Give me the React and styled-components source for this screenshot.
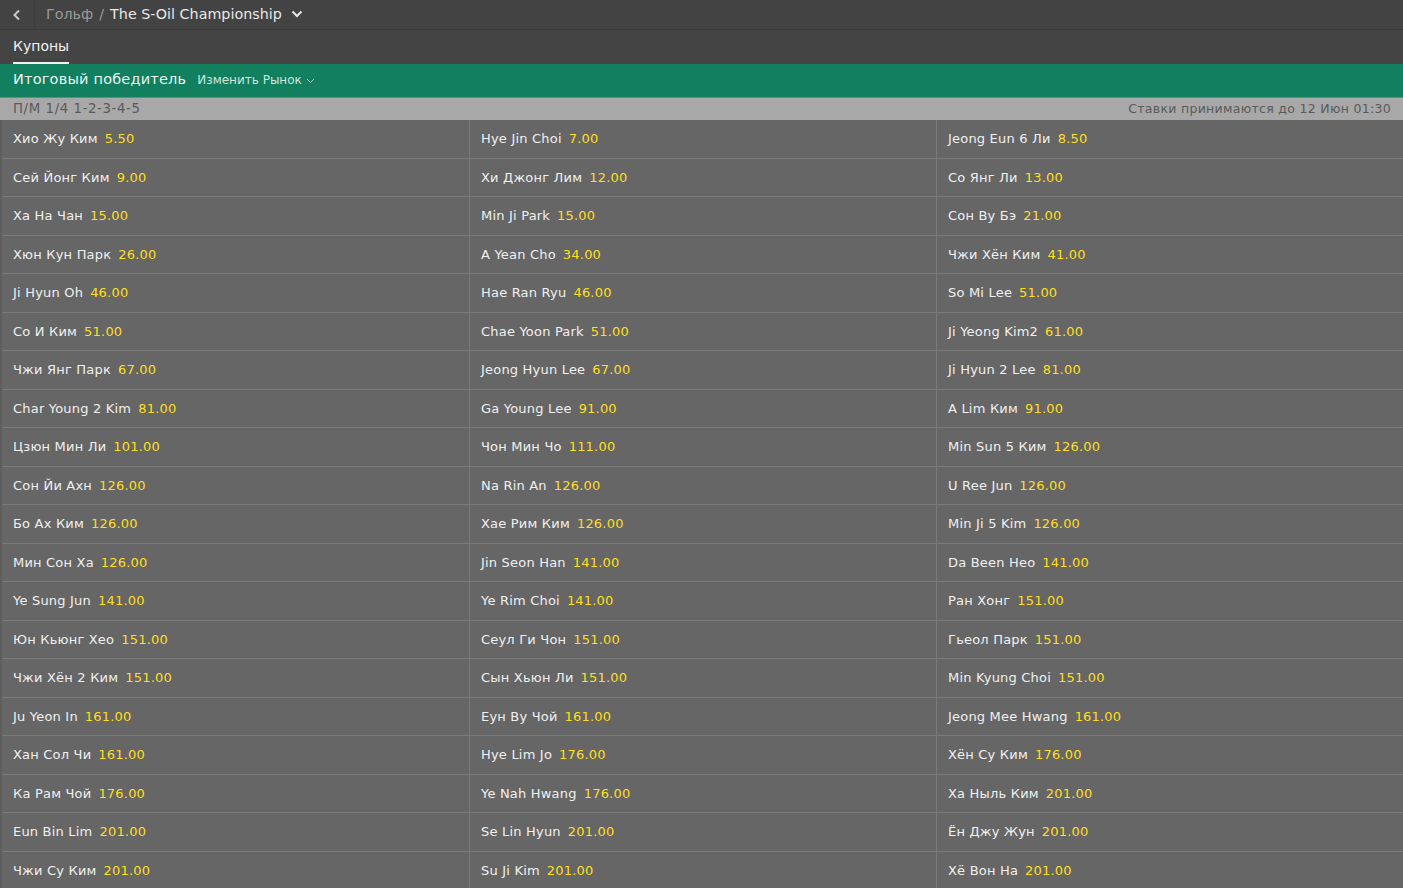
import styled, { createGlobalStyle } from "styled-components";

const rows = [
  [["Хио Жу Ким", "5.50"], ["Hye Jin Choi", "7.00"], ["Jeong Eun 6 Ли", "8.50"]],
  [["Сей Йонг Ким", "9.00"], ["Хи Джонг Лим", "12.00"], ["Со Янг Ли", "13.00"]],
  [["Ха На Чан", "15.00"], ["Min Ji Park", "15.00"], ["Сон Ву Бэ", "21.00"]],
  [["Хюн Кун Парк", "26.00"], ["A Yean Cho", "34.00"], ["Чжи Хён Ким", "41.00"]],
  [["Ji Hyun Oh", "46.00"], ["Hae Ran Ryu", "46.00"], ["So Mi Lee", "51.00"]],
  [["Со И Ким", "51.00"], ["Chae Yoon Park", "51.00"], ["Ji Yeong Kim2", "61.00"]],
  [["Чжи Янг Парк", "67.00"], ["Jeong Hyun Lee", "67.00"], ["Ji Hyun 2 Lee", "81.00"]],
  [["Char Young 2 Kim", "81.00"], ["Ga Young Lee", "91.00"], ["A Lim Ким", "91.00"]],
  [["Цзюн Мин Ли", "101.00"], ["Чон Мин Чо", "111.00"], ["Min Sun 5 Ким", "126.00"]],
  [["Сон Йи Ахн", "126.00"], ["Na Rin An", "126.00"], ["U Ree Jun", "126.00"]],
  [["Бо Ах Ким", "126.00"], ["Хае Рим Ким", "126.00"], ["Min Ji 5 Kim", "126.00"]],
  [["Мин Сон Ха", "126.00"], ["Jin Seon Han", "141.00"], ["Da Been Heo", "141.00"]],
  [["Ye Sung Jun", "141.00"], ["Ye Rim Choi", "141.00"], ["Ран Хонг", "151.00"]],
  [["Юн Кьюнг Хео", "151.00"], ["Сеул Ги Чон", "151.00"], ["Гьеол Парк", "151.00"]],
  [["Чжи Хён 2 Ким", "151.00"], ["Сын Хьюн Ли", "151.00"], ["Min Kyung Choi", "151.00"]],
  [["Ju Yeon In", "161.00"], ["Еун Ву Чой", "161.00"], ["Jeong Mee Hwang", "161.00"]],
  [["Хан Сол Чи", "161.00"], ["Hye Lim Jo", "176.00"], ["Хён Су Ким", "176.00"]],
  [["Ка Рам Чой", "176.00"], ["Ye Nah Hwang", "176.00"], ["Ха Ныль Ким", "201.00"]],
  [["Eun Bin Lim", "201.00"], ["Se Lin Hyun", "201.00"], ["Ён Джу Жун", "201.00"]],
  [["Чжи Су Ким", "201.00"], ["Su Ji Kim", "201.00"], ["Хё Вон На", "201.00"]],
];

const App = () => {
  return (
    <>
      <GlobalStyle />
      <Page>
        <TopBar>
          <BackButton>
            <svg width="10" height="12" viewBox="0 0 10 12">
              <path d="M7 1.5 L2.5 6 L7 10.5" fill="none" stroke="#c8c8c8" strokeWidth="2" />
            </svg>
          </BackButton>
          <Crumbs>
            <CrumbMuted>Гольф</CrumbMuted>
            <CrumbMuted>/</CrumbMuted>
            <CrumbMain>The S-Oil Championship</CrumbMain>
            <svg width="12" height="8" viewBox="0 0 12 8">
              <path d="M1.5 1.5 L6 6 L10.5 1.5" fill="none" stroke="#e6e6e6" strokeWidth="2" />
            </svg>
          </Crumbs>
        </TopBar>
        <TabBar>
          <Tab>Купоны</Tab>
        </TabBar>
        <MarketBar>
          <MarketTitle>Итоговый победитель</MarketTitle>
          <ChangeMarket>
            Изменить Рынок
            <svg width="9" height="6" viewBox="0 0 9 6">
              <path d="M1 1 L4.5 4.5 L8 1" fill="none" stroke="#9fcfbd" strokeWidth="1" />
            </svg>
          </ChangeMarket>
        </MarketBar>
        <InfoBar>
          <span>П/М 1/4 1-2-3-4-5</span>
          <span>Ставки принимаются до 12 Июн 01:30</span>
        </InfoBar>
        <Grid>
          {rows.map((row, i) =>
            row.map(([name, odds], j) => (
              <Cell key={`${i}-${j}`} $last={j === 2}>
                <Name>{name}</Name>
                <Odds>{odds}</Odds>
              </Cell>
            ))
          )}
        </Grid>
      </Page>
    </>
  );
};

const GlobalStyle = createGlobalStyle`
  html, body {
    margin: 0;
    padding: 0;
    background: #666666;
    overflow: hidden;
  }
  body {
    font-family: "DejaVu Sans", Verdana, sans-serif;
  }
`;

const Page = styled.div`
  width: 1403px;
  min-height: 888px;
  background: #666666;
`;

const TopBar = styled.div`
  height: 29px;
  display: flex;
  align-items: center;
  background: #434343;
  border-bottom: 1px solid #3a3a3a;
`;

const BackButton = styled.div`
  width: 35px;
  height: 100%;
  display: flex;
  align-items: center;
  justify-content: center;
  border-right: 1px solid #3c3c3c;
  box-sizing: border-box;
`;

const Crumbs = styled.div`
  display: flex;
  align-items: center;
  gap: 6px;
  padding-left: 11px;
  padding-bottom: 2px;
  font-size: 14.3px;

  svg {
    margin-left: 3px;
    margin-top: 1px;
  }
`;

const CrumbMuted = styled.span`
  color: #9a9a9a;
`;

const CrumbMain = styled.span`
  color: #e8e8e8;
`;

const TabBar = styled.div`
  height: 34px;
  display: flex;
  align-items: stretch;
  padding-left: 13px;
  background: #444444;
`;

const Tab = styled.div`
  display: flex;
  align-items: center;
  padding-bottom: 1px;
  color: #f2f2f2;
  font-size: 14px;
  border-bottom: 2px solid #f2f2f2;
  box-sizing: border-box;
`;

const MarketBar = styled.div`
  height: 34px;
  display: flex;
  align-items: center;
  gap: 11px;
  padding-left: 13px;
  padding-bottom: 3px;
  background: #127f5e;
  border-bottom: 1px solid #3aa07e;
  box-sizing: border-box;
`;

const MarketTitle = styled.span`
  color: #ecf5f1;
  font-size: 14.5px;
  letter-spacing: 0.2px;
`;

const ChangeMarket = styled.span`
  display: flex;
  align-items: center;
  gap: 4px;
  color: #cfe6dd;
  font-size: 12px;
  padding-top: 2px;

  svg {
    margin-top: 2px;
  }
`;

const InfoBar = styled.div`
  height: 22px;
  display: flex;
  align-items: center;
  justify-content: space-between;
  padding: 0 12px 1px 13px;
  box-sizing: border-box;
  background: #a8a8a8;
  color: #5a5a5a;
  font-size: 13.3px;
  letter-spacing: 0.6px;

  span:last-child {
    font-size: 12.5px;
    letter-spacing: 0.3px;
  }
`;

const Grid = styled.div`
  display: grid;
  grid-template-columns: 468px 467px 466px;
  grid-auto-rows: 38.5px;
  border-left: 2px solid #5e5e5e;
`;

const Cell = styled.div`
  display: flex;
  align-items: center;
  gap: 7px;
  padding-left: 11px;
  border-right: ${({ $last }) => ($last ? "none" : "1px solid #7a7a7a")};
  border-bottom: 1px solid #7a7a7a;
  box-sizing: border-box;
  font-size: 13px;
  letter-spacing: 0.2px;
`;

const Name = styled.span`
  color: #f0f0f0;
`;

const Odds = styled.span`
  color: #ffdf1b;
`;

export default App;
